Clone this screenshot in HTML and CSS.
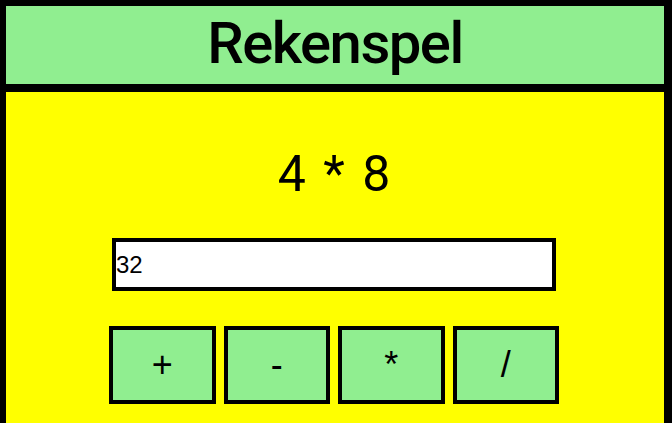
FILE: index.html
```html
<!DOCTYPE html>
<html lang="nl">
<head>
<meta charset="utf-8">
<title>Rekenspel</title>
<link rel="stylesheet" href="styles.css">
</head>
<body>
<div class="page">
  <header class="header"><h1 class="title">Rekenspel</h1></header>
  <main class="game">
    <div class="question">4 * 8</div>
    <input class="answer" type="text" value="32">
    <div class="ops">
      <button class="op">+</button>
      <button class="op">-</button>
      <button class="op">*</button>
      <button class="op">/</button>
    </div>
  </main>
</div>
</body>
</html>
```
FILE: styles.css
```css
html, body {
  margin: 0;
  padding: 0;
  background: #000;
  height: 100%;
  overflow: hidden;
}
.page {
  display: flex;
  flex-direction: column;
  gap: 8px;
  padding: 6px 8px 0 6px;
  height: 100%;
  box-sizing: border-box;
}
.header {
  background: #90ee90;
  height: 78px;
  display: flex;
  align-items: center;
  justify-content: center;
}
.title {
  margin: 0;
  font-family: Roboto, "Liberation Sans", sans-serif;
  font-weight: 500;
  font-size: 58px;
  letter-spacing: -1.5px;
  line-height: 78px;
  color: #000;
  position: relative;
  top: -2px;
}
.game {
  flex: 1;
  background: #ffff00;
  display: flex;
  flex-direction: column;
  align-items: center;
  padding: 53px 2px 0 0;
}
.question {
  font-family: Roboto, "Liberation Sans", sans-serif;
  font-size: 50px;
  line-height: 58px;
  color: #000;
  word-spacing: 5px;
}
.answer {
  margin-top: 35px;
  width: 444px;
  height: 53px;
  box-sizing: border-box;
  border: 4px solid #000;
  padding: 0;
  font-family: "Liberation Sans", Arial, sans-serif;
  font-size: 24px;
  background: #fff;
  color: #000;
  outline: none;
}
.ops {
  margin-top: 35px;
  display: flex;
  gap: 8px;
  width: 450px;
}
.op {
  flex: 1;
  height: 78px;
  box-sizing: border-box;
  border: 4px solid #000;
  background: #90ee90;
  font-family: "Liberation Sans", Arial, sans-serif;
  font-size: 36px;
  color: #000;
  padding: 0;
}
```
